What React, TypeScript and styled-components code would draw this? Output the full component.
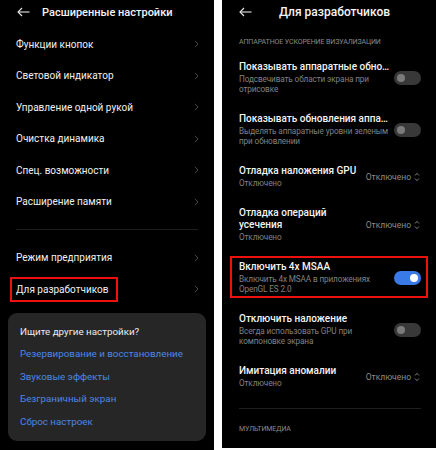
import React from "react";
import styled, { createGlobalStyle } from "styled-components";

const Global = createGlobalStyle`
  html, body { margin: 0; padding: 0; background: #ffffff; }
  body { font-family: Roboto, "Noto Sans", "Liberation Sans", sans-serif; }
  * { box-sizing: border-box; }
`;

const Page = styled.div`
  display: flex;
  gap: 8px;
  width: 436px;
  height: 450px;
  background: #ffffff;
  align-items: flex-start;
`;

const Phone = styled.div<{ $h: number }>`
  width: 214px;
  height: ${(p) => p.$h}px;
  background: #000;
  color: #f2f2f2;
  display: flex;
  flex-direction: column;
  overflow: hidden;
`;

const Header = styled.div<{ $titleGap: number }>`
  height: 24px;
  display: flex;
  align-items: center;
  padding-left: 17px;
  gap: ${(p) => p.$titleGap}px;
`;

const HeaderTitle = styled.div<{ $size: number }>`
  font-size: ${(p) => p.$size}px;
  font-weight: 500;
  color: #f4f4f4;
  white-space: nowrap;
`;

const List = styled.div`
  margin-top: 4.25px;
  display: flex;
  flex-direction: column;
`;

const Row = styled.div`
  position: relative;
  height: 31.5px;
  display: flex;
  align-items: center;
  justify-content: space-between;
  padding: 0 15px 0 16px;
  font-size: 10px;
  color: #f0f0f0;
  white-space: nowrap;
`;

const Highlight = styled.div<{ $top: number; $bottom: number; $left: number; $right?: number; $width?: number }>`
  position: absolute;
  top: ${(p) => p.$top}px;
  bottom: ${(p) => p.$bottom}px;
  left: ${(p) => p.$left}px;
  ${(p) => (p.$width !== undefined ? `width: ${p.$width}px;` : `right: ${p.$right}px;`)}
  border: 2px solid #ee0f0f;
  pointer-events: none;
`;

const Divider = styled.div<{ $mt: number; $mb: number; $ml: number; $mr: number }>`
  height: 1px;
  background: #1f1f1f;
  margin: ${(p) => `${p.$mt}px ${p.$mr}px ${p.$mb}px ${p.$ml}px`};
`;

const Card = styled.div`
  margin: 7.75px 8px 0 8px;
  height: 128px;
  background: #262626;
  border-radius: 9px;
  padding: 8px 12px;
  display: flex;
  flex-direction: column;
`;

const CardTitle = styled.div`
  font-size: 9.8px;
  line-height: 22.5px;
  color: #ededed;
  white-space: nowrap;
`;

const CardLink = styled.div`
  font-size: 9.8px;
  line-height: 22.5px;
  color: #4a86e6;
  white-space: nowrap;
`;

const SectionLabel = styled.div<{ $mt: number; $mb: number }>`
  font-size: 7px;
  line-height: 12px;
  color: #8a8a8a;
  padding-left: 17px;
  margin-top: ${(p) => p.$mt}px;
  margin-bottom: ${(p) => p.$mb}px;
  letter-spacing: -0.1px;
`;

const Item = styled.div`
  position: relative;
  display: flex;
  align-items: center;
  gap: 8px;
  padding: 9.5px 15px 9.5px 17px;
`;

const ItemText = styled.div`
  flex: 1;
  min-width: 0;
  display: flex;
  flex-direction: column;
`;

const ItemTitle = styled.div`
  font-size: 10px;
  line-height: 12px;
  font-weight: 500;
  color: #f4f4f4;
  white-space: nowrap;
`;

const ItemSub = styled.div`
  margin-top: 1px;
  font-size: 8.2px;
  line-height: 10px;
  letter-spacing: -0.12px;
  color: #808080;
  white-space: nowrap;
`;

const Toggle = styled.div<{ $on?: boolean }>`
  position: relative;
  flex: none;
  width: 27px;
  height: 14px;
  border-radius: 7px;
  background: ${(p) => (p.$on ? "#3a7ae6" : "#383838")};
  &::after {
    content: "";
    position: absolute;
    top: 3px;
    ${(p) => (p.$on ? "right: 3px;" : "left: 3px;")}
    width: 8px;
    height: 8px;
    border-radius: 50%;
    background: ${(p) => (p.$on ? "#ffffff" : "#7b7b7b")};
  }
`;

const Value = styled.div`
  flex: none;
  display: flex;
  align-items: center;
  gap: 3px;
  font-size: 8.5px;
  color: #8c8c8c;
  margin-right: 1px;
`;

const BackArrow = () => (
  <svg width="13" height="10" viewBox="0 0 13 10" fill="none" stroke="#e8e8e8" strokeWidth="1.1">
    <path d="M12.5 5H1" />
    <path d="M5 1L1 5l4 4" />
  </svg>
);

const Chevron = () => (
  <svg width="5" height="8" viewBox="0 0 5 8" fill="none" stroke="#4a4a4a" strokeWidth="1">
    <path d="M1 0.8L4 4 1 7.2" />
  </svg>
);

const UpDown = () => (
  <svg width="6" height="10" viewBox="0 0 6 10" fill="none" stroke="#8c8c8c" strokeWidth="0.9">
    <path d="M1 3.5L3 1.3l2 2.2" />
    <path d="M1 6.5L3 8.7l2-2.2" />
  </svg>
);

const leftItems = [
  "Функции кнопок",
  "Световой индикатор",
  "Управление одной рукой",
  "Очистка динамика",
  "Спец. возможности",
  "Расширение памяти",
];

export default function App() {
  return (
    <>
      <Global />
      <Page>
        <Phone $h={450}>
          <Header $titleGap={12}>
            <BackArrow />
            <HeaderTitle $size={11}>Расширенные настройки</HeaderTitle>
          </Header>
          <List>
            {leftItems.map((t) => (
              <Row key={t}>
                <span>{t}</span>
                <Chevron />
              </Row>
            ))}
          </List>
          <Divider $mt={11.5} $mb={12.25} $ml={16} $mr={16} />
          <Row>
            <span>Режим предприятия</span>
            <Chevron />
          </Row>
          <Row>
            <span>Для разработчиков</span>
            <Chevron />
            <Highlight $top={3.25} $bottom={3.25} $left={10} $width={108} />
          </Row>
          <Card>
            <CardTitle>Ищите другие настройки?</CardTitle>
            <CardLink>Резервирование и восстановление</CardLink>
            <CardLink>Звуковые эффекты</CardLink>
            <CardLink>Безграничный экран</CardLink>
            <CardLink>Сброс настроек</CardLink>
          </Card>
        </Phone>

        <Phone $h={448}>
          <Header $titleGap={27}>
            <BackArrow />
            <HeaderTitle $size={12}>Для разработчиков</HeaderTitle>
          </Header>
          <SectionLabel $mt={12} $mb={3.5}>АППАРАТНОЕ УСКОРЕНИЕ ВИЗУАЛИЗАЦИИ</SectionLabel>

          <Item>
            <ItemText>
              <ItemTitle>Показывать аппаратные обно…</ItemTitle>
              <ItemSub>
                Подсвечивать области экрана при
                <br />
                отрисовке
              </ItemSub>
            </ItemText>
            <Toggle />
          </Item>

          <Item>
            <ItemText>
              <ItemTitle>Показывать обновления аппа…</ItemTitle>
              <ItemSub>
                Выделять аппаратные уровни зеленым
                <br />
                при обновлении
              </ItemSub>
            </ItemText>
            <Toggle />
          </Item>

          <Item>
            <ItemText>
              <ItemTitle>Отладка наложения GPU</ItemTitle>
              <ItemSub>Отключено</ItemSub>
            </ItemText>
            <Value>
              Отключено
              <UpDown />
            </Value>
          </Item>

          <Item>
            <ItemText>
              <ItemTitle>
                Отладка операций
                <br />
                усечения
              </ItemTitle>
              <ItemSub>Отключено</ItemSub>
            </ItemText>
            <Value>
              Отключено
              <UpDown />
            </Value>
          </Item>

          <Item>
            <ItemText>
              <ItemTitle>Включить 4x MSAA</ItemTitle>
              <ItemSub>
                Включить 4x MSAA в приложениях
                <br />
                OpenGL ES 2.0
              </ItemSub>
            </ItemText>
            <Toggle $on />
            <Highlight $top={4.5} $bottom={5.5} $left={8} $right={8} />
          </Item>

          <Item>
            <ItemText>
              <ItemTitle>Отключить наложение</ItemTitle>
              <ItemSub>
                Всегда использовать GPU при
                <br />
                компоновке экрана
              </ItemSub>
            </ItemText>
            <Toggle />
          </Item>

          <Item>
            <ItemText>
              <ItemTitle>Имитация аномалии</ItemTitle>
              <ItemSub>Отключено</ItemSub>
            </ItemText>
            <Value>
              Отключено
              <UpDown />
            </Value>
          </Item>

          <Divider $mt={10} $mb={0} $ml={17} $mr={15} />
          <SectionLabel $mt={14.7} $mb={0}>МУЛЬТИМЕДИА</SectionLabel>
        </Phone>
      </Page>
    </>
  );
}
